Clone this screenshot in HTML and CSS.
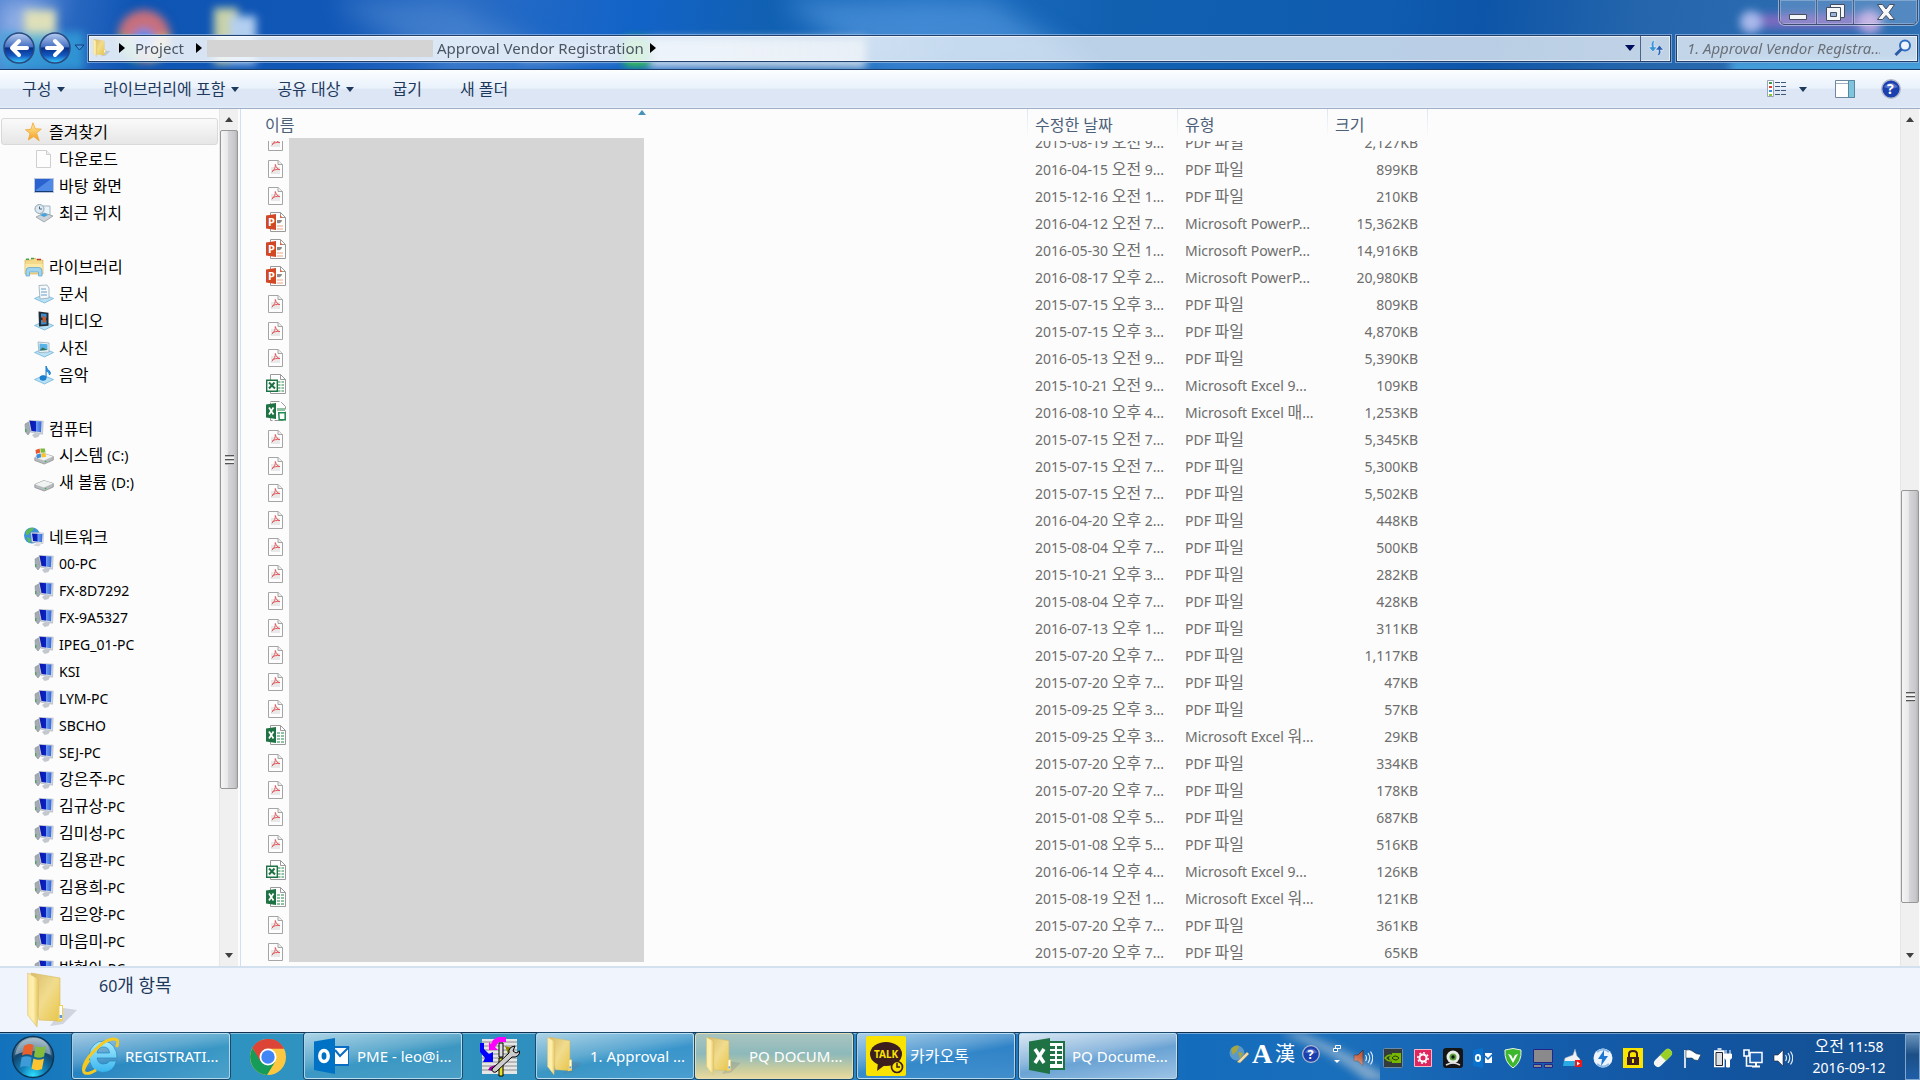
FILE: index.html
```html
<!DOCTYPE html>
<html lang="ko">
<head>
<meta charset="utf-8">
<title>Approval Vendor Registration</title>
<link rel="stylesheet" href="styles.css">
</head>
<body>
<svg class="defs" width="0" height="0" aria-hidden="true">
  <defs>
    <linearGradient id="gScreen" x1="0" y1="0" x2="1" y2="0"><stop offset="0" stop-color="#0a18a8"/><stop offset=".5" stop-color="#0b22c4"/><stop offset=".55" stop-color="#6f9df0"/><stop offset="1" stop-color="#3568dc"/></linearGradient>
    <linearGradient id="gFold" x1="0" y1="0" x2="1" y2="0"><stop offset="0" stop-color="#fbe9a0"/><stop offset=".5" stop-color="#fff0b0"/><stop offset="1" stop-color="#e3c25c"/></linearGradient>
    <linearGradient id="gFoldB" x1="0" y1="0" x2="1" y2="1"><stop offset="0" stop-color="#d9bd6b"/><stop offset=".5" stop-color="#f1dc8e"/><stop offset="1" stop-color="#e8c548"/></linearGradient>
    <linearGradient id="gNav" x1="0" y1="0" x2="0" y2="1"><stop offset="0" stop-color="#b9cdf0"/><stop offset=".46" stop-color="#4570c4"/><stop offset=".5" stop-color="#0a2f88"/><stop offset=".75" stop-color="#1258c0"/><stop offset="1" stop-color="#3cd0ff"/></linearGradient>
    <radialGradient id="gOrb" cx=".5" cy=".95" r=".95"><stop offset="0" stop-color="#2fe0ff"/><stop offset=".3" stop-color="#1284bd"/><stop offset=".65" stop-color="#12466f"/><stop offset="1" stop-color="#8fa9b8"/></radialGradient>
    <linearGradient id="gStar" x1="0" y1="0" x2="0" y2="1"><stop offset="0" stop-color="#fff1a0"/><stop offset="1" stop-color="#f59a1b"/></linearGradient>
    <linearGradient id="gIE" x1="0" y1="0" x2="0" y2="1"><stop offset="0" stop-color="#a8ecff"/><stop offset="1" stop-color="#38b4ee"/></linearGradient>
    <filter id="soft" x="-30%" y="-50%" width="160%" height="200%"><feGaussianBlur stdDeviation="4"/></filter>
    <filter id="wide" x="-30%" y="-50%" width="160%" height="200%"><feGaussianBlur stdDeviation="12"/></filter>
  </defs>
  <symbol id="pdf" viewBox="0 0 20 20"><path d="M2.500 2.500h9.500l4.500 4v13h-14z" fill="#fdfdfd" stroke="#a5a5a5"/><path d="M12 2.500v4h4.500" fill="#eee" stroke="#a5a5a5"/><path d="M5 9h9v7H5z" fill="#e9e9ea"/><path d="M9.300 6.500c1 3 2 4.500 4.700 5.200M9.300 6.500c.3 3-1 5.500-3.500 7.800M6 13.200c2-1.500 4.500-2 7.500-1.600" fill="none" stroke="#e4585a"/></symbol>
  <symbol id="ppt" viewBox="0 0 20 20"><path d="M4.500.5h10l5 5v14h-15z" fill="#fff" stroke="#9a9a9a"/><path d="M14.500.5v5h5" fill="none" stroke="#9a9a9a"/><path d="M11 4v7a3.500 3.500 0 0 0 5-3h-5z" fill="#8b8b8b"/><path d="M14 3v3h3z" fill="#d96a45"/><path d="M11 14h6M11 17h6" stroke="#f0a583"/><path d="M0 3.500 10 2v16L0 16.500z" fill="#d24726"/></symbol>
  <symbol id="xls" viewBox="0 0 20 20"><path d="M4.500.5h10l5 5v14h-15z" fill="#fff" stroke="#9a9a9a"/><path d="M14.500.5v5h5" fill="none" stroke="#9a9a9a"/><path d="M11 7h7v11h-7z" fill="#8fc3a3"/><path d="M11 9.500h7M11 12.500h7M11 15.500h7M14.500 7v11" stroke="#fff"/><path d="M0 3.500 10 2v16L0 16.500z" fill="#1f7244"/><path d="m3 6.500 4.500 7M7.500 6.500 3 13.500" stroke="#fff" stroke-width="1.700"/></symbol>
  <symbol id="xlo" viewBox="0 0 20 20"><path d="M4.500.5h10l5 5v14h-15z" fill="#fff" stroke="#9a9a9a"/><path d="M14.500.5v5h5" fill="none" stroke="#9a9a9a"/><path d="M12 7h6v11h-6z" fill="#8fc3a3"/><path d="M12 9.500h6M12 12.500h6M12 15.500h6M15 7v11" stroke="#fff"/><path d="M.7 6.200h10.600v11.100H.7z" fill="#fff" stroke="#1f7244" stroke-width="1.400"/><path d="m3 8.500 6 6M8.500 8.500l-5.500 6" stroke="#1f7244" stroke-width="2"/></symbol>
  <symbol id="xlm" viewBox="0 0 20 20"><path d="M4.500.5h10l5 5v14h-15z" fill="#fff" stroke="#9a9a9a" stroke-dasharray="9 2"/><path d="M11 7h8v3h-8z" fill="#8fc3a3"/><path d="M0 3.500 10 2v16L0 16.500z" fill="#1f7244"/><path d="m3 6.500 4.500 7M7.500 6.500 3 13.500" stroke="#fff" stroke-width="1.700"/><path d="M12.700 11.700h6.500v7h-6z" fill="#fff" stroke="#1f8a50" stroke-width="1.500"/></symbol>
  <symbol id="pc" viewBox="0 0 20 20"><path d="m1 5 3.500-2 2 9.500L4 16l-2.500-3z" fill="#a3abb3" stroke="#868e96" stroke-width=".6"/><path d="M1.800 10v3" stroke="#3d9a4a"/><path d="m5 1.500 14.200.7-.7 13-11.500-2z" fill="#d5d9e2" stroke="#a5abb8" stroke-width=".6"/><path d="M5.500 1.800 17.500 2.500 17 13.200 7.500 12z" fill="url(#gScreen)"/><path d="m8 16 3-2 5 1-1.500 3-4 1z" fill="#c3c8cf"/></symbol>
  <symbol id="star" viewBox="0 0 20 20"><path d="m9 .8 2.300 6 6 .3-4.700 4 2.600 7.700-5.500-4.200L4.300 18l1.700-6.500-4.500-3.700 5.500-.6z" fill="url(#gStar)" stroke="#eea83a" stroke-width=".8"/></symbol>
  <symbol id="doc" viewBox="0 0 20 20"><path d="M2.500 1.500h10l4 4v13h-14z" fill="#fdfdfd" stroke="#cfcfcf"/><path d="M12.500 1.500v4h4" fill="#eee" stroke="#cfcfcf"/></symbol>
  <symbol id="desk" viewBox="0 0 20 20"><path d="M.5 2.500h19v14H.5z" fill="#2a62cf" stroke="#b9c6dc"/><path d="m2 14 15-11h2v13H2z" fill="#5f9cf0" opacity=".7"/><path d="M1 15.500h18" stroke="#173b70"/></symbol>
  <symbol id="recent" viewBox="0 0 20 20"><path d="M8 3h8v9H8z" fill="#eaf3fa" stroke="#9fb4c4"/><circle cx="5.500" cy="6" r="4.500" fill="#dce9f2" stroke="#8ea5b5"/><path d="M5.500 3.500V6H8" stroke="#567" fill="none"/><path d="m2 14 8-4 9 3-9 6z" fill="#cdd3d8" stroke="#89939b" stroke-width=".7"/><path d="m6 12 5-2 3 2-4 2z" fill="#42a3df"/></symbol>
  <symbol id="lib" viewBox="0 0 20 20"><path d="M1 3h6l1-1.500h4L13 3h6v14H1z" fill="#f3d98a" stroke="#d6b25a" stroke-width=".7"/><path d="M2 2.200h3M7 1.500h3" stroke="#4aa34a" stroke-width="1.500"/><path d="M13 2.500h4" stroke="#c43b2b" stroke-width="1.500"/><path d="M1.500 7h17v9h-17z" fill="#fbeaa6"/><path d="M2 19v-5q0-3.500 3-3.500h10q3 0 3 3.500v5h-3.500v-4h-9v4z" fill="#9fd3ee" stroke="#5fa4cc" stroke-width=".7"/></symbol>
  <symbol id="tray" viewBox="0 0 20 20"><path d="m.5 14.500 9-4 10 4-9 4.500z" fill="#b9e1f5" stroke="#66aed4" stroke-width=".7"/></symbol>
  <symbol id="ldoc" viewBox="0 0 20 20"><use href="#tray"/><path d="m5 1.500 8-.5 2 3v10l-9 1z" fill="#f4f9fc" stroke="#98a9b5" stroke-width=".8"/><path d="M7 5h5M7 8h6M7 11h6" stroke="#6b9cc0"/></symbol>
  <symbol id="lvid" viewBox="0 0 20 20"><use href="#tray"/><path d="m4.500.5 10 1.200v13l-9.500.8z" fill="#222c35"/><path d="M7 2.500 12.500 3v4L7 6.500zM7 9l5.500.3v4L7 13.500z" fill="#3b8bd0"/><path d="m8 5 4 1v5l-3 1z" fill="#b85c34"/></symbol>
  <symbol id="lpic" viewBox="0 0 20 20"><use href="#tray"/><path d="m4 4 11 1v9l-10 .5z" fill="#f3f8fb" stroke="#98a9b5" stroke-width=".8"/><path d="m5.500 5.500 8 .7V12l-8 .7z" fill="#58b3e6"/><path d="m5.500 12.500 3-3 5 2.500z" fill="#386f52"/></symbol>
  <symbol id="lmus" viewBox="0 0 20 20"><use href="#tray"/><ellipse cx="9" cy="13" rx="3.400" ry="2.700" fill="#1c7fd0"/><path d="M12 13V1q1 4 4 5.500 1 2-.5 3.500 0-3-3-4" fill="#2d93df" stroke="#1c7fd0"/></symbol>
  <symbol id="drv" viewBox="0 0 20 20"><path d="m.8 11.500 9-4 9.500 3v3.500l-9 4-9.500-3.500z" fill="#b8bbbd" stroke="#85898c" stroke-width=".7"/><path d="m1 11.500 9-4 9 3-9 4z" fill="#f1f2f2"/><path d="M11.500 16v-1.200" stroke="#2bb04a" stroke-width="1.500"/></symbol>
  <symbol id="sys" viewBox="0 0 20 20"><use href="#drv"/><path d="m1.500 4 4-1.500.8 4L2 8z" fill="#e8582c"/><path d="m6.300 2.500 4.500 0 .7 4-4.700.2z" fill="#7cbb3c"/><path d="M2.300 8.700 6.500 7.200l.7 4L3 12.500z" fill="#3c8ede"/><path d="m7.200 7.500 4.300-.3.700 3.500-4.500.8z" fill="#f9c22c"/></symbol>
  <symbol id="net" viewBox="0 0 20 20"><circle cx="8" cy="8.500" r="8" fill="#3f93d8"/><path d="M2 4q4-4.500 8-3-1 3-4 4-1 3-4 3zM3 10l4 2-1 4q-3-1-3-6z" fill="#5dbb57"/><path d="M7 5.500 19.500 6 19 16.500l-11-1.500z" fill="#e9ebf0" stroke="#aeb3bd" stroke-width=".6"/><path d="m8 6.500 10.500.4-.5 8.400-9-1.300z" fill="url(#gScreen)"/><path d="m9 18.500 4-2.500 4 1-2 2.500z" fill="#d5d9de"/></symbol>
  <symbol id="folder" viewBox="0 0 52 56"><path d="m36 36 14 2-14 14-13 2z" fill="#6c7488" opacity=".25"/><path d="M4 1 33 6v43L12 48z" fill="url(#gFoldB)" stroke="#d9b95a" stroke-width=".6"/><path d="M33 33h3v16l-6 1z" fill="#efd058"/><path d="M32.500 34h2.500v13h-2.500z" fill="#fff"/><path d="M32.500 43h2.500v3h-2.500z" fill="#5b9be8"/><path d="m.7 1 10.800 6v29l-1.500 19L.7 43z" fill="url(#gFold)" stroke="#dcc06a" stroke-width=".6"/></symbol>
  <symbol id="sound" viewBox="0 0 20 20"><path d="M1 7h4l5-5v16l-5-5H1z" fill="currentColor" stroke="#223" stroke-width=".6"/><path d="M12.500 7q2 3 0 6M15 5q3.500 5 0 10M17.500 3.500q4.500 6.500 0 13" fill="none" stroke="#dce9f6" stroke-width="1.200"/></symbol>
  <symbol id="ball" viewBox="0 0 20 20"><circle cx="10" cy="10" r="9.300" fill="#1b3fae" stroke="#b4bccb" stroke-width="1.400"/><path d="M3 8q7-8 14 0-7 3-14 0z" fill="#7b93dc" opacity=".6"/></symbol>
</svg>

<header class="titlebar">
  <svg class="glass glass-left" aria-hidden="true">
    <path d="M330 0h110l150 70H450z" fill="#5f95d8" opacity=".45" filter="url(#wide)"/>
    <path d="M780 0h210l110 70H880z" fill="#5a9ce0" opacity=".6" filter="url(#wide)"/>
    <path d="M0 0h60L0 70z" fill="#b0c4f0" opacity=".8" filter="url(#wide)"/>
    <g filter="url(#soft)"><path d="M24 10h32v34H24z" fill="#dfe0b8"/><path d="M0 32h84v38H0z" fill="#35a6dc" opacity=".7"/>
    <circle cx="144" cy="36" r="26" fill="#c8707c"/><path d="M118 34q2 26 22 28l-4-20z" fill="#48b868"/><path d="M170 34q-2 26-22 28l4-22z" fill="#e0c060"/><circle cx="144" cy="40" r="11" fill="#4f8cf0"/>
    <path d="M214 8h24v56h-24z" fill="#c9d3a6"/><path d="M230 16h26v48h-26z" fill="#b3cff0"/>
    <path d="M520 44h100v18H520z" fill="#9fb8dc" opacity=".5"/><path d="M648 38h218v30H648z" fill="#dfe7ee" opacity=".85"/></g>
    <rect x="623" y="38" width="26" height="28" rx="5" fill="#3ed03c" filter="url(#soft)"/>
  </svg>
  <svg class="glass glass-right" aria-hidden="true"><g filter="url(#soft)"><path d="M60 14h120v14H60z" fill="#a06bc8" opacity=".7"/><circle cx="61" cy="22" r="11" fill="#a9b8ec"/><circle cx="180" cy="22" r="12" fill="#b9a6e0"/><path d="M40 60h200v14H40z" fill="#4fb0ea" opacity=".8"/></g></svg>

  <div class="captions">
    <button aria-label="최소화"><svg width="20" height="22"><path d="M1.500 13.500h17v5h-17z" fill="#f4f5f8" stroke="#454d60"/></svg></button>
    <button aria-label="이전 크기로"><svg width="22" height="22"><path d="M6.500 3.500h14v13h-14z" fill="#f4f5f8" stroke="#454d60"/><path d="M2.500 6.500h14v13h-14z" fill="#f4f5f8" stroke="#454d60"/><path d="M6.500 11.500h6v4h-6z" fill="#9bb2d8" stroke="#454d60"/></svg></button>
    <button class="close" aria-label="닫기"><svg width="22" height="22"><path d="M2.500 3.500h5L11 8l3.500-4.500h5L14 11.500l5.500 7h-5L11 14.500l-3.500 4h-5L8 11.500z" fill="#f8f8fa" stroke="#454d60"/></svg></button>
  </div>

  <div class="navrow">
    <nav class="travel">
      <button aria-label="뒤로"><svg width="32" height="32"><circle cx="16" cy="16" r="15" fill="url(#gNav)" stroke="#29497f" stroke-width="1.500"/><path d="M24 16H9m7-7-7 7 7 7" fill="none" stroke="#fff" stroke-width="4" stroke-linejoin="round" stroke-linecap="round"/></svg></button>
      <button aria-label="앞으로"><svg width="32" height="32"><circle cx="16" cy="16" r="15" fill="url(#gNav)" stroke="#29497f" stroke-width="1.500"/><path d="M8 16h15m-7-7 7 7-7 7" fill="none" stroke="#fff" stroke-width="4" stroke-linejoin="round" stroke-linecap="round"/></svg></button>
      <button aria-label="최근 페이지"><svg width="11" height="8"><path d="M1 1h9L5.500 6z" fill="#3f9ae0" stroke="#123a78"/></svg></button>
    </nav>
    <div class="address">
      <svg class="afolder" width="18" height="18" viewBox="0 0 52 56" preserveAspectRatio="none"><use href="#folder"/></svg>
      <svg class="tri" width="6" height="10"><path d="M0 0v10l6-5z"/></svg>
      <button class="crumb project">Project</button>
      <svg class="tri" width="6" height="10"><path d="M0 0v10l6-5z"/></svg>
      <span class="redacted"></span>
      <button class="crumb">Approval Vendor Registration</button>
      <svg class="tri" width="6" height="10"><path d="M0 0v10l6-5z"/></svg>
      <span class="spring"></span>
      <button class="drop" aria-label="이전 위치"><svg width="10" height="6"><path d="M0 0h10L5 6z" fill="#000d5c"/></svg></button>
      <button class="refresh" aria-label="새로 고침"><svg width="18" height="18"><path d="M8 1Q3 2 4.500 8H1.500l4.500 5 4-5H7Q6 4 8 1z" fill="#3a94d8" stroke="#fff" stroke-width=".5"/><path d="M10 17q5-1 3.500-6h3L12.500 6 8.500 11h3q.5 3-1.500 6z" fill="#2b62b5" stroke="#fff" stroke-width=".5"/></svg></button>
    </div>
    <label class="search"><input type="search" aria-label="검색" placeholder="1. Approval Vendor Registra..."><svg width="18" height="18"><circle cx="11" cy="6.500" r="5" fill="#eef5fc" stroke="#2f6fc0" stroke-width="2"/><path d="m7.500 10-6 6" stroke="#2a5ba8" stroke-width="3"/></svg></label>
  </div>
</header>

<div class="toolbar">
  <button>구성<i class="caret"></i></button>
  <button>라이브러리에 포함<i class="caret"></i></button>
  <button>공유 대상<i class="caret"></i></button>
  <button>굽기</button>
  <button>새 폴더</button>
  <span class="spring"></span>
  <button class="views" aria-label="보기"><svg width="20" height="18"><path d="M.5.500h6v16h-6z" fill="#fff" stroke="#99a5b5"/><path d="M2 3h3" stroke="#3e9a4b" stroke-width="2"/><path d="M2 7h3" stroke="#e03a2a" stroke-width="2"/><path d="M2 11h3" stroke="#3a8de0" stroke-width="2"/><path d="M2 15h3" stroke="#8cc63a" stroke-width="2"/><path d="M8 2.500h12M8 6.500h12M8 10.500h12M8 14.500h12" stroke="#3f5878" stroke-dasharray="5 1"/></svg><i class="caret"></i></button>
  <button aria-label="미리 보기 창"><svg width="20" height="18"><path d="M.5.500h19v17H.5z" fill="#fff" stroke="#6e87a0"/><path d="M1 3.500h13" stroke="#9db0c4"/><path d="M13.500.500h6v17h-6z" fill="#7fc4dd" stroke="#5a87a0"/></svg></button>
  <button aria-label="도움말"><svg width="20" height="20"><use href="#ball"/><text x="6" y="15" class="glyph g14">?</text></svg></button>
</div>

<main class="body">
  <aside class="sidebar">
    <nav class="tree">
      <a href="#" class="top selected"><svg><use href="#star"/></svg>즐겨찾기</a>
      <a href="#"><svg><use href="#doc"/></svg>다운로드</a>
      <a href="#"><svg><use href="#desk"/></svg>바탕 화면</a>
      <a href="#"><svg><use href="#recent"/></svg>최근 위치</a>
      <a href="#" class="top group"><svg><use href="#lib"/></svg>라이브러리</a>
      <a href="#"><svg><use href="#ldoc"/></svg>문서</a>
      <a href="#"><svg><use href="#lvid"/></svg>비디오</a>
      <a href="#"><svg><use href="#lpic"/></svg>사진</a>
      <a href="#"><svg><use href="#lmus"/></svg>음악</a>
      <a href="#" class="top group"><svg><use href="#pc"/></svg>컴퓨터</a>
      <a href="#"><svg><use href="#sys"/></svg><span>시스템 <span class="en">(C:)</span></span></a>
      <a href="#"><svg><use href="#drv"/></svg><span>새 볼륨 <span class="en">(D:)</span></span></a>
      <a href="#" class="top group"><svg><use href="#net"/></svg>네트워크</a>
      <a href="#"><svg><use href="#pc"/></svg><span class="en">00-PC</span></a>
      <a href="#"><svg><use href="#pc"/></svg><span class="en">FX-8D7292</span></a>
      <a href="#"><svg><use href="#pc"/></svg><span class="en">FX-9A5327</span></a>
      <a href="#"><svg><use href="#pc"/></svg><span class="en">IPEG_01-PC</span></a>
      <a href="#"><svg><use href="#pc"/></svg><span class="en">KSI</span></a>
      <a href="#"><svg><use href="#pc"/></svg><span class="en">LYM-PC</span></a>
      <a href="#"><svg><use href="#pc"/></svg><span class="en">SBCHO</span></a>
      <a href="#"><svg><use href="#pc"/></svg><span class="en">SEJ-PC</span></a>
      <a href="#"><svg><use href="#pc"/></svg><span>강은주<span class="en">-PC</span></span></a>
      <a href="#"><svg><use href="#pc"/></svg><span>김규상<span class="en">-PC</span></span></a>
      <a href="#"><svg><use href="#pc"/></svg><span>김미성<span class="en">-PC</span></span></a>
      <a href="#"><svg><use href="#pc"/></svg><span>김용관<span class="en">-PC</span></span></a>
      <a href="#"><svg><use href="#pc"/></svg><span>김용희<span class="en">-PC</span></span></a>
      <a href="#"><svg><use href="#pc"/></svg><span>김은양<span class="en">-PC</span></span></a>
      <a href="#"><svg><use href="#pc"/></svg><span>마음미<span class="en">-PC</span></span></a>
      <a href="#"><svg><use href="#pc"/></svg><span>박현아<span class="en">-PC</span></span></a>
    </nav>
    <div class="scrollbar side-scroll"><i class="up"></i><div class="track"><div class="thumb"></div></div><i class="down"></i></div>
  </aside>
  <section class="files">
    <div class="list">
      <table>
        <colgroup><col class="c-name"><col class="c-date"><col class="c-type"><col class="c-size"><col></colgroup>
        <thead><tr><th>이름</th><th>수정한 날짜</th><th>유형</th><th>크기</th><th></th></tr></thead>
        <tbody>
        <tr><td><svg><use href="#pdf"/></svg></td><td>2015-08-19 <span>오전</span> 9...</td><td>PDF <span>파일</span></td><td>2,127KB</td></tr>
        <tr><td><svg><use href="#pdf"/></svg></td><td>2016-04-15 <span>오전</span> 9...</td><td>PDF <span>파일</span></td><td>899KB</td></tr>
        <tr><td><svg><use href="#pdf"/></svg></td><td>2015-12-16 <span>오전</span> 1...</td><td>PDF <span>파일</span></td><td>210KB</td></tr>
        <tr><td><svg><use href="#ppt"/><text x="2" y="14" class="glyph g11">P</text></svg></td><td>2016-04-12 <span>오전</span> 7...</td><td>Microsoft PowerP...</td><td>15,362KB</td></tr>
        <tr><td><svg><use href="#ppt"/><text x="2" y="14" class="glyph g11">P</text></svg></td><td>2016-05-30 <span>오전</span> 1...</td><td>Microsoft PowerP...</td><td>14,916KB</td></tr>
        <tr><td><svg><use href="#ppt"/><text x="2" y="14" class="glyph g11">P</text></svg></td><td>2016-08-17 <span>오후</span> 2...</td><td>Microsoft PowerP...</td><td>20,980KB</td></tr>
        <tr><td><svg><use href="#pdf"/></svg></td><td>2015-07-15 <span>오후</span> 3...</td><td>PDF <span>파일</span></td><td>809KB</td></tr>
        <tr><td><svg><use href="#pdf"/></svg></td><td>2015-07-15 <span>오후</span> 3...</td><td>PDF <span>파일</span></td><td>4,870KB</td></tr>
        <tr><td><svg><use href="#pdf"/></svg></td><td>2016-05-13 <span>오전</span> 9...</td><td>PDF <span>파일</span></td><td>5,390KB</td></tr>
        <tr><td><svg><use href="#xlo"/></svg></td><td>2015-10-21 <span>오전</span> 9...</td><td>Microsoft Excel 9...</td><td>109KB</td></tr>
        <tr><td><svg><use href="#xlm"/></svg></td><td>2016-08-10 <span>오후</span> 4...</td><td>Microsoft Excel <span>매</span>...</td><td>1,253KB</td></tr>
        <tr><td><svg><use href="#pdf"/></svg></td><td>2015-07-15 <span>오전</span> 7...</td><td>PDF <span>파일</span></td><td>5,345KB</td></tr>
        <tr><td><svg><use href="#pdf"/></svg></td><td>2015-07-15 <span>오전</span> 7...</td><td>PDF <span>파일</span></td><td>5,300KB</td></tr>
        <tr><td><svg><use href="#pdf"/></svg></td><td>2015-07-15 <span>오전</span> 7...</td><td>PDF <span>파일</span></td><td>5,502KB</td></tr>
        <tr><td><svg><use href="#pdf"/></svg></td><td>2016-04-20 <span>오후</span> 2...</td><td>PDF <span>파일</span></td><td>448KB</td></tr>
        <tr><td><svg><use href="#pdf"/></svg></td><td>2015-08-04 <span>오후</span> 7...</td><td>PDF <span>파일</span></td><td>500KB</td></tr>
        <tr><td><svg><use href="#pdf"/></svg></td><td>2015-10-21 <span>오후</span> 3...</td><td>PDF <span>파일</span></td><td>282KB</td></tr>
        <tr><td><svg><use href="#pdf"/></svg></td><td>2015-08-04 <span>오후</span> 7...</td><td>PDF <span>파일</span></td><td>428KB</td></tr>
        <tr><td><svg><use href="#pdf"/></svg></td><td>2016-07-13 <span>오후</span> 1...</td><td>PDF <span>파일</span></td><td>311KB</td></tr>
        <tr><td><svg><use href="#pdf"/></svg></td><td>2015-07-20 <span>오후</span> 7...</td><td>PDF <span>파일</span></td><td>1,117KB</td></tr>
        <tr><td><svg><use href="#pdf"/></svg></td><td>2015-07-20 <span>오후</span> 7...</td><td>PDF <span>파일</span></td><td>47KB</td></tr>
        <tr><td><svg><use href="#pdf"/></svg></td><td>2015-09-25 <span>오후</span> 3...</td><td>PDF <span>파일</span></td><td>57KB</td></tr>
        <tr><td><svg><use href="#xls"/></svg></td><td>2015-09-25 <span>오후</span> 3...</td><td>Microsoft Excel <span>워</span>...</td><td>29KB</td></tr>
        <tr><td><svg><use href="#pdf"/></svg></td><td>2015-07-20 <span>오후</span> 7...</td><td>PDF <span>파일</span></td><td>334KB</td></tr>
        <tr><td><svg><use href="#pdf"/></svg></td><td>2015-07-20 <span>오후</span> 7...</td><td>PDF <span>파일</span></td><td>178KB</td></tr>
        <tr><td><svg><use href="#pdf"/></svg></td><td>2015-01-08 <span>오후</span> 5...</td><td>PDF <span>파일</span></td><td>687KB</td></tr>
        <tr><td><svg><use href="#pdf"/></svg></td><td>2015-01-08 <span>오후</span> 5...</td><td>PDF <span>파일</span></td><td>516KB</td></tr>
        <tr><td><svg><use href="#xlo"/></svg></td><td>2016-06-14 <span>오후</span> 4...</td><td>Microsoft Excel 9...</td><td>126KB</td></tr>
        <tr><td><svg><use href="#xls"/></svg></td><td>2015-08-19 <span>오전</span> 1...</td><td>Microsoft Excel <span>워</span>...</td><td>121KB</td></tr>
        <tr><td><svg><use href="#pdf"/></svg></td><td>2015-07-20 <span>오후</span> 7...</td><td>PDF <span>파일</span></td><td>361KB</td></tr>
        <tr><td><svg><use href="#pdf"/></svg></td><td>2015-07-20 <span>오후</span> 7...</td><td>PDF <span>파일</span></td><td>65KB</td></tr>
        </tbody>
      </table>
      <div class="names-cover"></div>
      <i class="sort"></i>
    </div>
    <div class="scrollbar main-scroll"><i class="up"></i><div class="track"><div class="thumb"></div></div><i class="down"></i></div>
  </section>
</main>

<footer class="details"><svg width="52" height="56"><use href="#folder"/></svg><p><span>60</span>개 항목</p></footer>

<div class="taskbar">
  <svg class="streak" aria-hidden="true"><path d="M22 0q52 20 92 48H86Q52 18 0 0z" fill="#cfd6dc" opacity=".55" filter="url(#soft)"/></svg>
  <button class="start" aria-label="시작"><svg width="44" height="44"><circle cx="22" cy="22" r="20.500" fill="url(#gOrb)" stroke="#0c3656" stroke-width="1.500"/><path d="M4 20Q7 4 22 3t18 17q-18-8-36 0z" fill="#dfe9ef" opacity=".45"/><path d="M13 11q5-3.500 9.500-1L21 20.500q-5-2.500-10 0z" fill="#e8602c"/><path d="M24.500 11q5 2.500 10.500 0L33 21.500q-5 2.500-10 0z" fill="#84bd3e"/><path d="M10.500 22.500q5-2.500 10 0L19 32.500q-5-2.500-10 0z" fill="#3f9ad8"/><path d="M22.500 23.500q5 2.500 10.500 0L31 34q-5 2.500-10.500-.5z" fill="#fbc430"/></svg></button>
  <button class="task"><svg width="38" height="38" viewBox="0 0 38 38"><path d="M8 18.500A13 14.500 0 1 1 36 21H16q1 6 6.500 6 4.500 0 6-3h7q-3 11.500-14 11.500Q8 34 8 18.500zM16 16h12.500q-.5-6-6-6-5.500 0-6.500 6z" fill="url(#gIE)" stroke="#2485bd" stroke-width=".7"/><path d="M8 23Q0 34 4 36q4 1.500 11-3M3 35Q0 27 14 13T36 3q2 1.500-.5 7" fill="none" stroke="#f5c91f" stroke-width="3"/></svg><span>REGISTRATI...</span></button>
  <button class="pin" aria-label="Chrome"><svg width="38" height="38" viewBox="0 0 38 38"><circle cx="19" cy="19" r="18" fill="#fdc83f"/><path d="M3.500 10A18 18 0 0 1 35 10.500H19z" fill="#db4437"/><path d="M3.500 10A18 18 0 0 0 18 37l8-13-14-2z" fill="#149c58"/><path d="M3.500 10 12 24l7-13.500h16Q28-1 16 1.500 7 3.500 3.500 10z" fill="#db4437"/><circle cx="19" cy="19" r="8.500" fill="#fff"/><circle cx="19" cy="19" r="6.700" fill="#4285f4"/></svg></button>
  <button class="task"><svg width="38" height="38" viewBox="0 0 38 38"><path d="M20 9h16v20H20z" fill="#0a6cc4"/><path d="M22 11h13v16H22z" fill="#fff"/><path d="m22 13 5 6 9-9" fill="none" stroke="#0a6cc4" stroke-width="2"/><path d="M1 4.500 22 1v36L1 33z" fill="#0072c6"/><ellipse cx="11" cy="19" rx="4.200" ry="5.500" fill="none" stroke="#fff" stroke-width="3.500"/></svg><span>PME - leo@i...</span></button>
  <button class="pin" aria-label="도구"><svg width="40" height="40" viewBox="0 0 40 40"><path d="M2 2h35v35H2z" fill="#e6e6e6"/><path d="M2 5h35M2 9h35M2 13h35M2 17h35M2 21h35M2 25h35M2 29h35M2 33h35" stroke="#8a8a8a"/><path d="M26 0h-8l-5 3-2 4-2-2v8h9l-3-3 4-5h7z" fill="#f0f"/><path d="M0 6v9l5 6-2 4h10V15l-4 2-5-5V6z" fill="#00f"/><path d="M8 33q10 3 10-6l-8 3z" fill="#909"/><path d="m25 9 7 2-4 6z" fill="#880"/><path d="M19 6h4v14h-4z" fill="#ddd" stroke="#000"/><path d="M19 21h4v18h-4z" fill="#e8e020" stroke="#000"/><path d="m12 32 17-16q-1-6 6-7l-2 5 3 2 4-2q-1 7-8 6L16 35q-4 1-4-3z" fill="#ccc" stroke="#000"/></svg></button>
  <button class="task active joined"><svg width="36" height="40"><use href="#folder"/></svg><span>1. Approval ...</span></button>
  <button class="task flash"><svg width="36" height="40"><use href="#folder"/></svg><span>PQ DOCUM...</span></button>
  <button class="task kakao"><svg width="40" height="40" viewBox="0 0 40 40"><rect width="40" height="40" rx="2" fill="#fbe300"/><ellipse cx="20" cy="18" rx="16" ry="12" fill="#3c1e1e"/><path d="m12 27-1 8 8-6z" fill="#3c1e1e"/><text x="8" y="22" class="talk">TALK</text><circle cx="31" cy="31" r="5.500" fill="#fbe300" stroke="#3c1e1e" stroke-width="1.700"/><path d="M31 27v4h3" stroke="#3c1e1e" fill="none" stroke-width="1.500"/></svg><span class="ko">카카오톡</span></button>
  <button class="task bright"><svg width="38" height="38" viewBox="0 0 38 38"><path d="M20 5h16v27H20z" fill="#fff" stroke="#1f7244" stroke-width="2"/><path d="M22 9h5v3h-5zm7 0h5v3h-5zm-7 5h5v3h-5zm7 0h5v3h-5zm-7 5h5v3h-5zm7 0h5v3h-5zm-7 5h5v3h-5zm7 0h5v3h-5z" fill="#1f7244"/><path d="M1 4.500 22 1v36L1 33z" fill="#1f7244"/><path d="m7 12 9 14M16 12 7 26" stroke="#fff" stroke-width="3.500"/></svg><span>PQ Docume...</span></button>
  <span class="spring"></span>
  <div class="ime">
    <svg width="20" height="20"><circle cx="8" cy="9" r="7.500" fill="#5b9ac8"/><path d="M2 5q5-5 8-3l-2 5-4 4zM9 8l5 1-3 6z" fill="#a8a63c"/><path d="m8 18 10-10 2 2-9 9z" fill="#f5d9a0" stroke="#886" stroke-width=".5"/></svg>
    <span class="latin">A</span><span class="han">漢</span>
    <svg class="imehelp" width="18" height="18" viewBox="0 0 20 20"><use href="#ball"/><text x="6" y="15" class="glyph g14">?</text></svg>
    <svg width="10" height="24"><path d="M3.500 3.500h5v3h-5z" fill="none" stroke="#fff"/><path d="M1.500 6.500h4v3h-4z" fill="#1d6cb8" stroke="#fff"/><path d="M2 18h6l-3 3z" fill="#fff"/></svg>
  </div>
  <div class="tray">
    <svg class="red"><use href="#sound"/></svg>
    <svg viewBox="0 0 20 20"><rect x=".5" y=".5" width="19" height="19" rx="1" fill="#333b3c" stroke="#6d8ba6"/><path d="M9 5h9v10H9z" fill="#76b900"/><path d="M2 10q5-6 11 0-6 6-11 0z" fill="none" stroke="#76b900" stroke-width="1.500"/><circle cx="8" cy="10" r="2" fill="#76b900"/><path d="M9 10q3-4 7 0-3 4-7 0" stroke="#263000" fill="none"/></svg>
    <svg viewBox="0 0 20 20"><path d="M1.500 1.500h17v17h-17z" fill="#e0265e" stroke="#f3b8ca"/><circle cx="10" cy="10" r="3.500" fill="none" stroke="#fff" stroke-width="2"/><circle cx="10" cy="10" r="5.200" fill="none" stroke="#fff" stroke-width="1.500" stroke-dasharray="2 2"/></svg>
    <svg viewBox="0 0 20 20"><rect width="20" height="20" rx="3" fill="#151515"/><circle cx="10" cy="9" r="6.500" fill="#e8ece8"/><circle cx="10" cy="9" r="3.500" fill="#5ba03a"/><circle cx="10" cy="9" r="1.700" fill="#111"/><path d="M3 17q7-4 14 0" stroke="#ddd" fill="none" stroke-width="1.500"/></svg>
    <svg viewBox="0 0 20 20"><path d="m0 2 10-2v20L0 18z" fill="#0a72cc"/><ellipse cx="5" cy="10" rx="2.200" ry="3" fill="none" stroke="#fff" stroke-width="1.800"/><path d="M12 5h7v10h-7z" fill="#fff"/><path d="m12 8 3 3 5-5" stroke="#0a6cc4" fill="none" stroke-width="1.500"/></svg>
    <svg viewBox="0 0 20 20"><path d="M2 2q8-3 16 0 1 12-8 18Q1 14 2 2z" fill="#3db82e" stroke="#e8f5e4"/><path d="m5 6 5 9 5-9-3 1-2 4-2-4z" fill="#fff"/></svg>
    <svg viewBox="0 0 20 20"><path d="M.5 1.500h19v13H.5z" fill="#8a8a8c" stroke="#24248a"/><path d="M.5 16.500h8v3h-8zm11 0h8v3h-8z" fill="#8a8a8c" stroke="#24248a"/></svg>
    <svg viewBox="0 0 20 20"><path d="m12 1 2 7 3 3v3H1l1-4 8-3z" fill="#eef2f5" stroke="#8fa3b5" stroke-width=".5"/><path d="M1 13h16v5H0z" fill="#29abe2"/><path d="M12 12h7v7h-7z" fill="#f01818"/><path d="M14 13.500v4l3-2z" fill="#fff"/></svg>
    <svg viewBox="0 0 20 20"><circle cx="10" cy="10" r="9.500" fill="#eef4fb"/><path d="M4 4q6-5 12 0M4 16q6 5 12 0" stroke="#8ebce8" stroke-width="2" fill="none"/><path d="m11 2-6 9h4l-1 7 7-10h-4z" fill="#1f77d4"/></svg>
    <svg viewBox="0 0 20 20"><path d="M0 0h20v20H0z" fill="#fbe300"/><path d="M4 9h12v8H4z" fill="#3c1e1e"/><path d="M6 9V6q0-3 4-3t4 3v3" fill="none" stroke="#3c1e1e" stroke-width="2"/><path d="M10 11v4" stroke="#fbe300" stroke-width="2"/></svg>
    <svg viewBox="0 0 20 20"><g transform="rotate(-45 10 10)"><rect x="-1" y="6" width="22" height="8" rx="4" fill="#f5f5f2"/><path d="M10 6h7a4 4 0 0 1 0 8h-7z" fill="#9ad026"/></g></svg>
    <svg viewBox="0 0 20 20"><path d="M2 2v18" stroke="#fff" stroke-width="1.600"/><path d="M3 2q4-1 7 1.500 3 3 8 3l-3 6q-4 0-6-2.500H3z" fill="#fff" stroke="#123" stroke-width=".5"/></svg>
    <svg viewBox="0 0 20 20"><path d="M1.800 3h9v15.500h-9zM4.500 1h4" fill="#f6f6f6" stroke="#fff" stroke-width="1.600"/><path d="M3 4.500h6.500v13H3z" fill="#dadfe4" stroke="#223"/><path d="M13 2v4M17 2v4M11.500 6h7v4l-2 2v7h-3v-7l-2-2z" fill="#fff" stroke="#fff"/></svg>
    <svg viewBox="0 0 20 20"><path d="M7 4.500h12v10H7z" fill="#1b5fae" stroke="#fff" stroke-width="1.500"/><path d="M9 18.500h8M13 15v3" stroke="#fff" stroke-width="2"/><path d="M1 2h5v6H1zM3.500 8v10H9" fill="none" stroke="#fff" stroke-width="1.600"/></svg>
    <svg class="white"><use href="#sound"/></svg>
  </div>
  <time class="clock"><span><span class="ko">오전</span> 11:58</span><span>2016-09-12</span></time>
  <button class="showdesk" aria-label="바탕 화면 보기"></button>
</div>
</body>
</html>
```

FILE: styles.css
```css
* { box-sizing: border-box; }
body {
  margin: 0;
  height: 100vh;
  display: flex;
  flex-direction: column;
  overflow: hidden;
  font: 14px/20px "Noto Sans", "Noto Sans CJK KR", sans-serif;
  color: #000;
  background: #fcfcfc;
}
button { margin: 0; padding: 0; border: 0; background: none; font: inherit; color: inherit; display: flex; align-items: center; }
svg { display: block; flex: none; }
.defs { position: absolute; }
.spring { flex: 1; }
.glyph { fill: #fff; font-weight: 700; font-family: "Noto Sans", sans-serif; }
.g11 { font-size: 11px; }
.g14 { font-size: 14px; }

/* Title bar */
.titlebar {
  position: relative;
  flex: none;
  height: 70px;
  padding-top: 32px;
  border-bottom: 1px solid #1d3f6e;
  background: linear-gradient(97deg, #4a7fd0 0%, #0f55b4 7%, #1157b6 17%, #2a6cc4 24%, #1263c8 33%, #1160b2 40%, #1d6dc2 48%, #1160b0 58%, #0f5cb0 72%, #0d55a8 77%, #2465ac 85%, #2f70b4 100%);
}
.glass { position: absolute; top: 0; height: 69px; overflow: hidden; }
.glass-left { left: 0; width: 1200px; }
.glass-right { right: 0; width: 230px; }
.captions {
  position: absolute;
  top: 0;
  right: 2px;
  display: flex;
  height: 25px;
  border: 1px solid #3b4d70;
  border-top: 0;
  border-radius: 0 0 6px 6px;
  background: rgba(255, 255, 255, .18);
  box-shadow: 0 0 0 1px rgba(255, 255, 255, .45);
}
.captions button { width: 37px; justify-content: center; border-right: 1px solid #4c6288; box-shadow: inset 0 0 0 1px rgba(255, 255, 255, .25); }
.captions .close { width: 63px; border-right: 0; }
.navrow { position: relative; display: flex; height: 32px; align-items: center; padding: 0 2px 0 3px; }
.travel { display: flex; align-items: center; gap: 4px; width: 85px; }
.travel button:last-child { margin-left: -1px; }
.address {
  flex: 1;
  display: flex;
  align-items: center;
  height: 27px;
  padding-left: 4px;
  border: 1px solid #23406c;
  background: linear-gradient(90deg, rgba(244, 248, 252, .88) 0, rgba(244, 248, 252, .86) 40%, rgba(240, 244, 248, .76) 55%);
  box-shadow: inset 0 0 0 1px rgba(255, 255, 255, .6), 0 0 0 1px rgba(160, 195, 235, .6);
  color: #4b5563;
}
.crumb { font-size: 15px; }
.project { margin: 0 12px 0 10px; }
.afolder { margin-right: 8px; }
.redacted { width: 226px; height: 17px; margin: 0 4px 0 5px; background: #d4d4d4; }
.address .redacted + .crumb { margin-right: 6px; }
.drop { width: 20px; justify-content: center; }
.refresh { width: 30px; align-self: stretch; justify-content: center; border-left: 1px solid #4c6288; }
.search {
  display: flex;
  align-items: center;
  width: 242px;
  height: 27px;
  margin-left: 5px;
  padding: 0 5px 0 10px;
  border: 1px solid #23406c;
  background: rgba(240, 245, 250, .78);
  box-shadow: inset 0 0 0 1px rgba(255, 255, 255, .6), 0 0 0 1px rgba(160, 195, 235, .6);
}
.search input { flex: 1; min-width: 0; appearance: none; border: 0; padding: 0; background: none; outline: 0; font: italic 15px/20px "Noto Sans", "Noto Sans CJK KR", sans-serif; }
.search input::placeholder { color: #6b7078; opacity: 1; }

/* Command bar */
.toolbar {
  flex: none;
  display: flex;
  align-items: center;
  gap: 38px;
  height: 39px;
  padding: 0 19px 0 22px;
  border-bottom: 1px solid #a0afc8;
  background: linear-gradient(#fcfeff 0, #e9f1fb 48%, #dce6f4 50%, #dce6f4 94%, #e6eef9 100%);
  color: #1e395b;
  font-size: 16px;
}
.toolbar button { gap: 6px; }
.toolbar button:nth-last-child(-n+2) { margin-left: -10px; }
.toolbar button:last-child { margin-left: -12px; }
.toolbar .views { gap: 12px; }
.caret { border: 4px solid transparent; border-top: 5px solid #1e395b; border-bottom: 0; }

/* Body */
.body { flex: 1; min-height: 0; display: flex; overflow: hidden; }
.sidebar { flex: none; display: flex; width: 241px; border-right: 1px solid #d0e0f2; }
.tree { flex: 1; padding: 9px 1px; overflow: hidden; }
.tree a {
  display: flex;
  align-items: center;
  gap: 5px;
  height: 27px;
  padding-left: 33px;
  color: #000;
  font-size: 16px;
  text-decoration: none;
  white-space: nowrap;
}
.tree svg { width: 20px; height: 20px; }
.tree .top { padding-left: 23px; }
.tree .group { margin-top: 27px; }
.tree .selected { padding-left: 22px; border: 1px solid #d9d9d9; border-radius: 3px; background: linear-gradient(#fafafa, #e6e6e6); }
.tree .en { font-size: 14px; }

.scrollbar { flex: none; display: flex; flex-direction: column; width: 19px; background: #f0f0f0; border-left: 1px solid #e6e6e6; }
.up, .down { height: 21px; display: flex; align-items: center; justify-content: center; }
.up::before, .down::before { content: ""; border: 4px solid transparent; }
.up::before { border-top: 0; border-bottom: 5px solid #404040; }
.down::before { border-bottom: 0; border-top: 5px solid #404040; }
.track { flex: 1; display: grid; }
.side-scroll { margin-right: 2px; }
.main-scroll { margin-right: 1px; }
.side-scroll .track { grid-template-rows: 659fr 156fr; }
.main-scroll .track { grid-template-rows: 360fr 413fr 42fr; }
.main-scroll .thumb { grid-row: 2; }
.thumb {
  display: flex;
  align-items: center;
  justify-content: center;
  border: 1px solid #979797;
  border-radius: 2px;
  background: linear-gradient(90deg, #f5f5f5, #e9e9eb 40%, #d6d6d9 45%, #c8c8cc 85%, #b5b5b9);
}
.thumb::before { content: ""; width: 9px; height: 10px; background: repeating-linear-gradient(#555 0 1px, #bbb 1px 2px, #f2f2f2 2px 4px); }

.files { flex: 1; min-width: 0; display: flex; }
.list { position: relative; flex: 1; min-width: 0; overflow: hidden; }
.list table { width: 100%; margin-top: -12px; table-layout: fixed; border-collapse: separate; border-spacing: 0; }
.c-name { width: 787px; }
.c-date, .c-type { width: 150px; }
.c-size { width: 100px; }
.list th {
  position: sticky;
  top: 0;
  height: 32px;
  padding: 0 0 0 7px;
  background: linear-gradient(#dbe7f3, #fcfcfc 90%) right / 1px 100% no-repeat #fcfcfc;
  color: #4c607a;
  font-size: 16px;
  font-weight: 400;
  text-align: left;
}
.list th:first-child { padding-left: 24px; }
.list th:last-child { background: #fcfcfc; }
.list td { height: 27px; padding: 0 0 0 7px; color: #6d6d6d; line-height: 27px; white-space: nowrap; }
.list td:first-child { padding: 2px 0 5px 25px; }
.list td:nth-child(4) { padding: 0 10px 0 0; text-align: right; }
.list td svg { width: 20px; height: 20px; }
.list td span { font-size: 16px; line-height: 1; }
.names-cover { position: absolute; left: 48px; top: 29px; bottom: 4px; width: 355px; background: #d5d5d5; }
.sort { position: absolute; left: 397px; top: 1px; border: 4px solid transparent; border-top: 0; border-bottom: 5px solid #4a93b8; }

/* Details pane */
.details { flex: none; display: flex; height: 66px; padding: 4px 27px; gap: 20px; border-top: 2px solid #d3e0f0; background: #f0f4fc; color: #1e395b; font-size: 18px; }
.details p { margin: 3px 0; }
.details span { font-size: 16px; }

/* Taskbar */
.taskbar {
  position: relative;
  flex: none;
  display: flex;
  height: 48px;
  border-top: 1px solid #10304f;
  background: linear-gradient(90deg, #1272bd 0, #1a7cbd 4%, #2f93c2 12%, #2f90bd 26%, #2e90c8 34%, #2780c6 50%, #146cbc 62%, #1a6fbb 70%, #1560b0 78%, #12549f 90%, #17508f 100%);
  box-shadow: inset 0 1px rgba(255, 255, 255, .4);
  color: #fff;
}
.streak { position: absolute; right: 540px; top: 0; width: 100px; height: 47px; }
.start { width: 72px; padding-left: 11px; }
.task {
  width: 158px;
  height: 46px;
  margin: 0 4px 0 0;
  padding: 0 8px;
  gap: 6px;
  border: 1px solid rgba(200, 230, 245, .75);
  border-radius: 3px;
  background: linear-gradient(170deg, rgba(255, 255, 255, .6) 0, rgba(255, 255, 255, .25) 40%, rgba(255, 255, 255, .06) 55%, rgba(255, 255, 255, .14) 100%);
  box-shadow: 0 0 0 1px #1c4a6c;
  font-size: 15px;
  white-space: nowrap;
}
.pin { width: 70px; justify-content: center; padding-right: 3px; }
.joined { margin-right: 1px; }
.active svg, .flash svg { margin: 0 1px 0 2px; }
.flash { background: linear-gradient(#a9c4bf 0, #8db9bb 45%, #c9cd9f 80%, #ead9a0 100%); border-color: #e2dfb4; }
.bright { background: linear-gradient(170deg, #d9e7f3 0, #8fb9de 42%, #6aa3d4 55%, #9bc2e5 100%); }
.kakao { gap: 4px; }
.taskbar .ko { font-size: 16px; }
.talk { fill: #fbe300; font: 700 10px/1 "Noto Sans", sans-serif; }
.ime { position: relative; display: flex; align-items: center; height: 42px; width: 124px; gap: 3px; }
.latin { width: 20px; font: 700 28px/28px "Liberation Serif", serif; text-align: center; }
.han { font-size: 20px; line-height: 28px; }
.imehelp { margin: 0 9px 0 4px; }
.tray { display: flex; align-items: center; gap: 10px; margin-top: 2px; }
.tray svg { width: 20px; height: 20px; }
.red { color: #c9552f; }
.white { color: #fff; }
.clock { display: flex; flex-direction: column; align-items: center; justify-content: center; width: 112px; line-height: 22px; white-space: nowrap; }
.clock span .ko, .clock > span { height: 22px; }
.showdesk { width: 15px; margin-top: 1px; border: 1px solid #7fa6cf; background: linear-gradient(#6a93bb, #1c4f86 45%, #1f5fa8); }
```
